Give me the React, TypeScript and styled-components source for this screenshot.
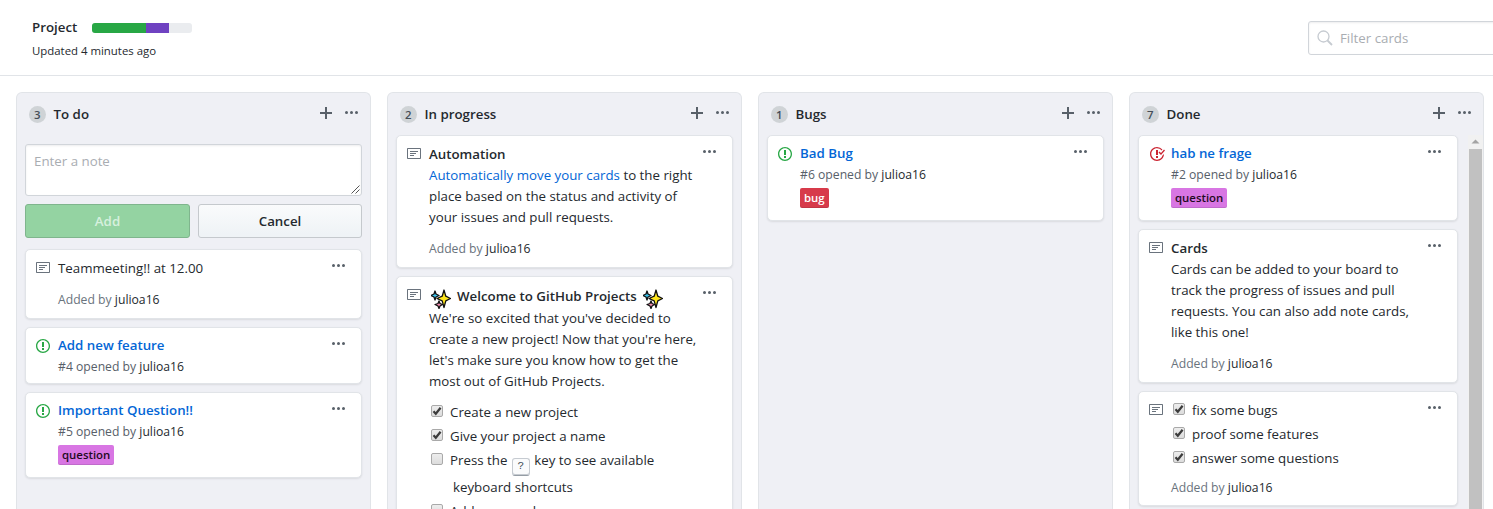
import React from 'react';
import styled, { createGlobalStyle } from 'styled-components';

const Global = createGlobalStyle`
  * { box-sizing: border-box; }
  html, body { margin: 0; height: 509px; overflow: hidden; background: #fff; }
  body { font-family: 'Open Sans', 'Noto Sans', sans-serif; font-size: 13.3px; line-height: 21px; color: #24292e; }
`;

const Page = styled.div`
  width: 1493px; height: 509px; overflow: hidden; display: flex; flex-direction: column;
`;
const Header = styled.header`
  height: 76px; flex: none; border-bottom: 1px solid #e1e4e8; display: flex;
  justify-content: space-between; padding: 17px 0 0 32px;
`;
const TitleRow = styled.div`
  display: flex; align-items: center; gap: 16px; height: 21px;
`;
const Title = styled.h1`
  margin: 0; font-size: 13.3px; font-weight: 600; width: 44px; white-space: nowrap;
`;
const Progress = styled.div`
  display: flex; width: 100px; height: 10px; border-radius: 3px; overflow: hidden; background: #eaecef;
`;
const Segment = styled.i<{ $width: number; $color: string }>`
  width: ${p => p.$width}px; background: ${p => p.$color};
`;
const Updated = styled.div`
  font-size: 11.4px; line-height: 18px; margin-top: 4px;
`;
const Filter = styled.label`
  display: flex; align-items: center; gap: 7px; width: 220px; height: 34px; margin: 4px -35px 0 0;
  padding-left: 8px; border: 1px solid #d1d5da; border-radius: 3px; color: #a9adb2;
  box-shadow: inset 0 1px 2px rgba(27,31,35,.075); font-size: 13.3px;
`;
const Board = styled.main`
  display: flex; gap: 16px; padding: 16px 0 0 16px; flex: 1; min-height: 0;
`;
const ColumnBox = styled.section`
  width: 355px; flex: none; background: #eff0f5; border: 1px solid #e1e4e8; border-bottom: 0;
  border-radius: 6px 6px 0 0; display: flex; flex-direction: column; min-height: 0;
`;
const ColumnHead = styled.div`
  height: 42px; flex: none; display: flex; align-items: center; padding: 0 12px 0 12px;
`;
const Count = styled.span`
  min-width: 15px; height: 17px; padding: 0 5px; border-radius: 9px; background: #cfd3d6;
  font-size: 11.4px; line-height: 17px; font-weight: 600; color: #444d56;
`;
const ColumnName = styled.h2`
  margin: 0 auto 0 8px; font-size: 13.3px; font-weight: 600;
`;
const HeadIcons = styled.div`
  display: flex; align-items: center; gap: 13px; color: #586069; height: 16px; margin-top: -2px;
`;
const Scroller = styled.div`
  display: flex; flex: 1; min-height: 0;
`;
const Cards = styled.div<{ $narrow?: boolean }>`
  width: ${p => (p.$narrow ? 336 : 353)}px; flex: none; padding: 0 8px; display: flex; flex-direction: column; gap: 8px;
  overflow: hidden;
`;
const Card = styled.article<{ $h: number }>`
  position: relative; flex: none; height: ${p => p.$h}px; display: flex; gap: 8px; background: #fff;
  border: 1px solid #e1e4e8; border-radius: 5px; box-shadow: 0 1px 2px rgba(27,31,35,.1);
  padding: 7px 8px 0 10px;
`;
const IconSlot = styled.span<{ $color: string }>`
  width: 14px; height: 21px; flex: none; color: ${p => p.$color}; padding-top: 3px;
  svg { display: block; overflow: visible; }
`;
const Body = styled.div<{ $top?: number }>`
  flex: 1; min-width: 0; padding-top: ${p => p.$top ?? 0}px;
`;
const More = styled.span`
  position: absolute; right: 16px; top: 8px; color: #586069; svg { display: block; }
`;
const IssueTitle = styled.a`
  display: block; font-weight: 600; color: #0366d6; white-space: nowrap;
`;
const Meta = styled.div`
  font-size: 12.2px; line-height: 21px; color: #586069; white-space: nowrap; b { font-weight: 400; color: #24292e; }
`;
const Added = styled(Meta)<{ $gap?: number }>`
  margin-top: ${p => p.$gap ?? 10}px; color: #6a737d;
`;
const Label = styled.span<{ $bg: string; $fg: string }>`
  display: inline-block; height: 20px; padding: 0 4px; border-radius: 2px; background: ${p => p.$bg}; color: ${p => p.$fg};
  font-size: 11.4px; font-weight: 600; line-height: 19px; vertical-align: top; margin-top: 3px;
  box-shadow: inset 0 -1px 0 rgba(27,31,35,.12);
`;
const Line = styled.div<{ $ls?: number }>`
  white-space: nowrap; letter-spacing: ${p => p.$ls ?? 0}px;
`;
const Strong = styled.div`
  font-weight: 600; white-space: nowrap;
`;
const Link = styled.a` color: #0366d6; `;
const Welcome = styled(Strong)`
  display: flex; align-items: center; gap: 6px; height: 23px; padding-left: 2px; svg { margin-top: 4px; }
`;
const Tasks = styled.div<{ $top?: number }>`
  display: flex; flex-direction: column; gap: 3px; margin-top: ${p => p.$top ?? 0}px;
`;
const TaskRow = styled.div`
  display: flex; align-items: flex-start; gap: 7px; padding-left: 2px; white-space: nowrap;
`;
const Box = styled.span`
  width: 12px; height: 12px; flex: none; margin-top: 3px; border: 1px solid #a9a9a9; border-radius: 2px;
  background: linear-gradient(#ededed, #dcdcdc); svg { display: block; }
`;
const Indent = styled.div` padding-left: 3px; margin-top: 1px; `;
const Key = styled.kbd`
  display: inline-block; width: 18px; height: 18px; border: 1px solid #c6cbd1; border-bottom-color: #959da5; border-radius: 3px;
  background: #fafbfc; box-shadow: inset 0 -1px 0 #c6cbd1; font: 11px/15px 'Liberation Mono', monospace; text-align: center;
  color: #444d56; vertical-align: -4px; margin: 0 1px;
`;
const NoteForm = styled.form`
  display: grid; grid-template-columns: 165px 164px; gap: 8px; margin-top: 9px; margin-bottom: 3px; flex: none;
`;
const NoteInput = styled.div`
  grid-column: 1 / 3; height: 52px; background: #fff; border: 1px solid #d1d5da; border-radius: 3px;
  padding: 6px 8px 0; color: #a9adb2; display: flex; justify-content: space-between;
  box-shadow: inset 0 1px 2px rgba(27,31,35,.075);
  svg { align-self: flex-end; margin: 0 -7px 1px 0; }
`;
const Button = styled.button<{ $primary?: boolean }>`
  height: 34px; border-radius: 3px; font: 600 13.3px/20px 'Open Sans', sans-serif; padding: 0 0 1px;
  color: ${p => (p.$primary ? '#d7f0de' : '#24292e')};
  border: 1px solid ${p => (p.$primary ? '#7fb58d' : '#c5c9cd')};
  background: ${p => (p.$primary ? '#94d3a2' : 'linear-gradient(#fafbfc, #eff3f6 90%)')};
`;
const Scrollbar = styled.div`
  width: 15px; flex: none; margin-left: 2px; background: #f1f1f1; display: flex; flex-direction: column; align-items: center;
  svg { flex: none; display: block; }
`;
const Thumb = styled.div` width: 13px; flex: 1; background: #c1c1c1; `;

const PATHS = {
  plus: [12, 'M12 9H7v5H5V9H0V7h5V2h2v5h5v2z'],
  kebab: [13, 'M1.5 9a1.5 1.5 0 100-3 1.5 1.5 0 000 3zm5 0a1.5 1.5 0 100-3 1.5 1.5 0 000 3zM13 7.5a1.5 1.5 0 11-3 0 1.5 1.5 0 013 0z'],
  note: [14, 'M3 10h4V9H3v1zm0-2h6V7H3v1zm0-2h8V5H3v1zm10 6H1V3h12v9zM1 2c-.55 0-1 .45-1 1v9c0 .55.45 1 1 1h12c.55 0 1-.45 1-1V3c0-.55-.45-1-1-1H1z'],
  open: [14, 'M7 2.3c3.14 0 5.7 2.56 5.7 5.7s-2.56 5.7-5.7 5.7A5.71 5.71 0 011.3 8c0-3.14 2.56-5.7 5.7-5.7zM7 1C3.14 1 0 4.14 0 8s3.14 7 7 7 7-3.14 7-7-3.14-7-7-7zm1 3H6v5h2V4zm0 6H6v2h2v-2z'],
  closed: [16, 'M7 10h2v2H7v-2zm2-6H7v5h2V4zm1.5 1.5l-1 1L12 9l4-4.5-1-1L12 7l-1.5-1.5zM8 13.7A5.71 5.71 0 012.3 8c0-3.14 2.56-5.7 5.7-5.7 1.83 0 3.45.88 4.5 2.2l.92-.92A6.947 6.947 0 008 1C4.14 1 1 4.14 1 8s3.14 7 7 7 7-3.14 7-7l-1.52 1.52c-.66 2.41-2.86 4.19-5.48 4.19v-.01z'],
} as const;
type IconName = keyof typeof PATHS;

const Icon = ({ name }: { name: IconName }) => (
  <svg width={PATHS[name][0]} height="16" viewBox={`0 0 ${PATHS[name][0]} 16`} fill="currentColor" fillRule="evenodd">
    <path d={PATHS[name][1]} />
  </svg>
);
const COLORS: Record<string, string> = { note: '#6a737d', open: '#28a745', closed: '#cb2431' };

const Sparkles = () => (
  <svg width="20" height="20" viewBox="0 0 20 20" stroke="#111" strokeWidth="1.3" strokeLinejoin="round">
    <path fill="#3cc3ee" d="M4 2l1 3 3 1.500-3 1.500-1 3-1-3-3-1.500 3-1.500z" />
    <path fill="#f48fb1" d="M8 12l1 2.500 2.500 1-2.500 1.500-1 2.500-1-2.500-3-1.500 3-1z" />
    <path fill="#ffe61c" d="M13 1l1.800 6.200 4.700 2.300-4.700 2.300L13 18.500l-1.800-6.700L6 9.500l5.200-2.300z" />
  </svg>
);

const CardItem = ({ icon, h, top, children }: { icon: IconName; h: number; top?: number; children: React.ReactNode }) => (
  <Card $h={h}>
    <IconSlot $color={COLORS[icon]}><Icon name={icon} /></IconSlot>
    <Body $top={top}>{children}</Body>
    <More><Icon name="kebab" /></More>
  </Card>
);
const By = ({ gap }: { gap?: number }) => <Added $gap={gap}>Added by <b>julioa16</b></Added>;
const Issue = ({ n, title, label, closed }: { n: number; title: string; label?: 'bug' | 'question'; closed?: boolean }) => (
  <CardItem icon={closed ? 'closed' : 'open'} h={label ? 86 : 57}>
    <IssueTitle>{title}</IssueTitle>
    <Meta>#{n} opened by <b>julioa16</b></Meta>
    {label && <Label $bg={label === 'bug' ? '#d73a4a' : '#d876e3'} $fg={label === 'bug' ? '#fff' : '#1f0a22'}>{label}</Label>}
  </CardItem>
);
const Task = ({ done, children }: { done?: boolean; children: React.ReactNode }) => (
  <TaskRow>
    <Box>{done && (
      <svg width="10" height="10" viewBox="0 0 10 10" fill="none" stroke="#3c3c3c" strokeWidth="2.200"><path d="M1.500 5.200l2.300 2.500L8.600 1.700" /></svg>
    )}</Box>
    <div>{children}</div>
  </TaskRow>
);
const Column = ({ count, name, scroll, children }: { count: number; name: string; scroll?: boolean; children: React.ReactNode }) => (
  <ColumnBox>
    <ColumnHead>
      <Count>{count}</Count>
      <ColumnName>{name}</ColumnName>
      <HeadIcons><Icon name="plus" /><Icon name="kebab" /></HeadIcons>
    </ColumnHead>
    <Scroller>
      <Cards $narrow={scroll}>{children}</Cards>
      {scroll && (
        <Scrollbar>
          <svg width="13" height="14" viewBox="0 0 13 14"><path d="M2.500 8.500h8l-4-4z" fill="#a3a3a3" /></svg>
          <Thumb />
        </Scrollbar>
      )}
    </Scroller>
  </ColumnBox>
);

export default function App() {
  return (
    <Page>
      <Global />
      <Header>
        <div>
          <TitleRow>
            <Title>Project</Title>
            <Progress><Segment $width={54} $color="#28a745" /><Segment $width={23} $color="#6f42c1" /></Progress>
          </TitleRow>
          <Updated>Updated 4 minutes ago</Updated>
        </div>
        <Filter>
          <svg width="16" height="16" viewBox="0 0 16 16" fill="none" stroke="#c6cbd1" strokeWidth="1.300">
            <circle cx="6.500" cy="6.500" r="5.500" /><path d="M10.500 10.500l4.500 4.500" strokeWidth="1.800" />
          </svg>
          Filter cards
        </Filter>
      </Header>
      <Board>
        <Column count={3} name="To do">
          <NoteForm>
            <NoteInput>
              Enter a note
              <svg width="9" height="9" viewBox="0 0 9 9" stroke="#555" strokeWidth="1"><path d="M0.500 8.500l8-8M4.500 8.500l4-4" /></svg>
            </NoteInput>
            <Button type="button" $primary>Add</Button>
            <Button type="button">Cancel</Button>
          </NoteForm>
          <CardItem icon="note" h={70} top={1}><Line>Teammeeting!! at 12.00</Line><By /></CardItem>
          <Issue n={4} title="Add new feature" />
          <Issue n={5} title="Important Question!!" label="question" />
        </Column>
        <Column count={2} name="In progress">
          <CardItem icon="note" h={133} top={1}>
            <Strong>Automation</Strong>
            <Line><Link>Automatically move your cards</Link> to the right</Line>
            <Line>place based on the status and activity of</Line>
            <Line>your issues and pull requests.</Line>
            <By />
          </CardItem>
          <CardItem icon="note" h={300} top={1}>
            <Welcome><Sparkles />Welcome to GitHub Projects<Sparkles /></Welcome>
            <Line>We're so excited that you've decided to</Line>
            <Line>create a new project! Now that you're here,</Line>
            <Line>let's make sure you know how to get the</Line>
            <Line>most out of GitHub Projects.</Line>
            <Tasks $top={10}>
              <Task done>Create a new project</Task>
              <Task done>Give your project a name</Task>
              <Task>Press the <Key>?</Key> key to see available<Indent>keyboard shortcuts</Indent></Task>
              <Task>Add a new column</Task>
            </Tasks>
          </CardItem>
        </Column>
        <Column count={1} name="Bugs">
          <Issue n={6} title="Bad Bug" label="bug" />
        </Column>
        <Column count={7} name="Done" scroll>
          <Issue n={2} title="hab ne frage" label="question" closed />
          <CardItem icon="note" h={154} top={1}>
            <Strong>Cards</Strong>
            <Line>Cards can be added to your board to</Line>
            <Line>track the progress of issues and pull</Line>
            <Line>requests. You can also add note cards,</Line>
            <Line>like this one!</Line>
            <By />
          </CardItem>
          <CardItem icon="note" h={115} top={1}>
            <Tasks>
              <Task done>fix some bugs</Task>
              <Task done>proof some features</Task>
              <Task done>answer some questions</Task>
            </Tasks>
            <By gap={8} />
          </CardItem>
        </Column>
      </Board>
    </Page>
  );
}
